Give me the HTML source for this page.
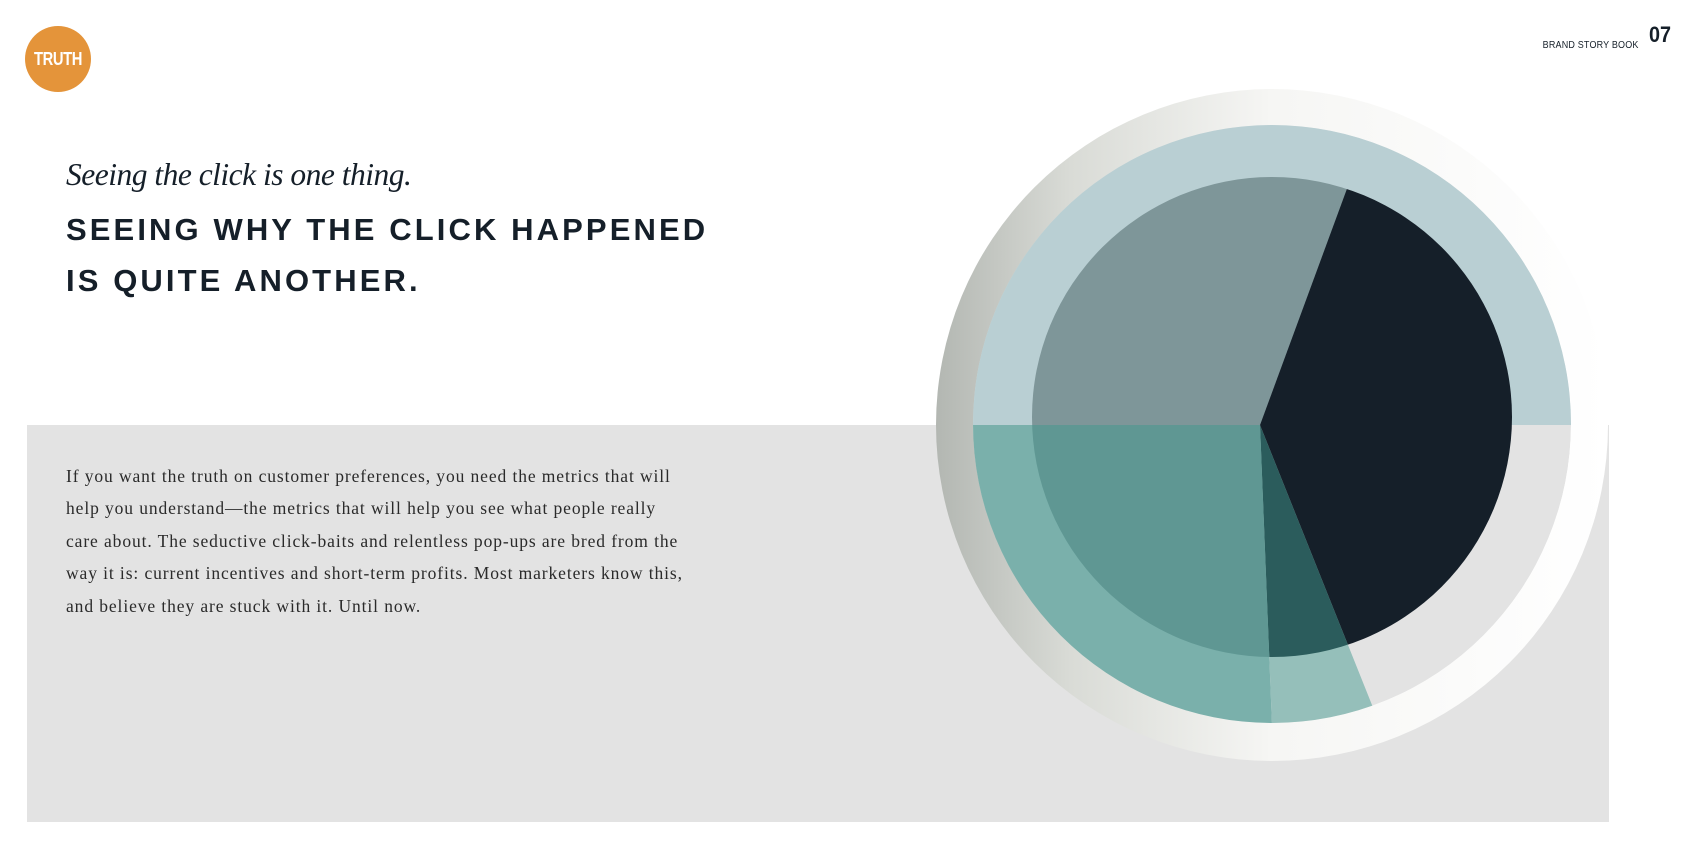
<!DOCTYPE html>
<html><head><meta charset="utf-8"><style>
html,body{margin:0;padding:0;background:#fff;width:1696px;height:848px;overflow:hidden;position:relative;font-family:"Liberation Sans",sans-serif}
.band{position:absolute;left:27px;top:425px;width:1582px;height:397px;background:#e3e3e3}
.logo{position:absolute;left:25px;top:26px;width:66px;height:66px;border-radius:50%;background:#e4943a}
.logo span{display:block;color:#fff;font-weight:bold;font-size:18px;line-height:66px;text-align:center;letter-spacing:-0.5px;transform:scaleX(0.82)}
.it{position:absolute;left:66px;top:157px;font-family:"Liberation Serif",serif;font-style:italic;font-size:31.5px;color:#151f29;letter-spacing:-0.5px}
.cap{position:absolute;left:66px;font-weight:900;font-size:31px;color:#151f29;letter-spacing:3.1px;white-space:nowrap}
.body{position:absolute;left:66px;top:460px;white-space:nowrap;font-family:"Liberation Serif",serif;font-size:17.5px;letter-spacing:0.9px;line-height:32.4px;color:#2a2a2a}
.hdr{position:absolute;right:57px;top:40px;font-size:10px;color:#151f29;letter-spacing:0.2px;transform:scaleX(0.9);transform-origin:right}
.num{position:absolute;left:1649px;top:22px;font-size:22px;font-weight:bold;color:#151f29;transform:scaleX(0.9);transform-origin:left}
svg{position:absolute;left:0;top:0}
</style></head><body>
<div class="band"></div>
<svg width="1696" height="848">
<defs>
<linearGradient id="g" x1="0" x2="1" y1="0" y2="0">
<stop offset="0" stop-color="#b3b7b2"/><stop offset="0.2" stop-color="#d9dbd6"/><stop offset="0.5" stop-color="#f6f6f4"/><stop offset="1" stop-color="#fff"/></linearGradient>
<clipPath id="co"><circle cx="1272" cy="424" r="299"/></clipPath>
<clipPath id="ci"><circle cx="1272" cy="417" r="240"/></clipPath>
</defs>
<circle cx="1272" cy="425" r="336" fill="url(#g)"/>
<g clip-path="url(#co)">
<circle cx="1272" cy="424" r="299" fill="#e3e3e3"/>
<rect x="900" y="100" width="800" height="325" fill="#b9cfd3"/>
<polygon points="1260,425 900,425 900,800 1275,800" fill="#7ab0ab"/>
<polygon points="1260,425 1275,800 1410,800" fill="#95bfba"/>
</g>
<g clip-path="url(#ci)">
<polygon points="1260,425 900,425 900,50 1398,50" fill="#7e9699"/>
<polygon points="1260,425 1398,50 1700,50 1700,800 1410,800" fill="#151f29"/>
<polygon points="1260,425 1410,800 1275,800" fill="#2b5c5c"/>
<polygon points="1260,425 1275,800 900,800 900,425" fill="#5f9793"/>
</g>
</svg>
<div class="logo"><span>TRUTH</span></div>
<div class="hdr">BRAND STORY BOOK</div>
<div class="num">07</div>
<div class="it">Seeing the click is one thing.</div>
<div class="cap" style="top:212px">SEEING WHY THE CLICK HAPPENED</div>
<div class="cap" style="top:263px">IS QUITE ANOTHER.</div>
<div class="body">If you want the truth on customer preferences, you need the metrics that will<br>help you understand—the metrics that will help you see what people really<br>care about. The seductive click-baits and relentless pop-ups are bred from the<br>way it is: current incentives and short-term profits. Most marketers know this,<br>and believe they are stuck with it. Until now.</div>
</body></html>
